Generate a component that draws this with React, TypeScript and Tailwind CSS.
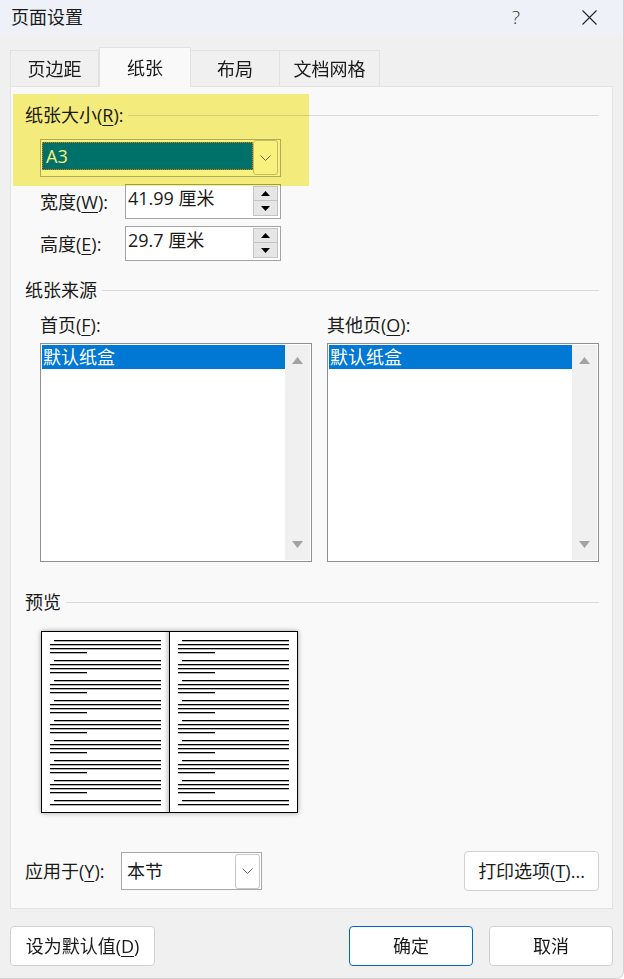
import React from "react";

const font = "font-['Open_Sans','Noto_Sans_CJK_SC',sans-serif]";

function Key({ k }: { k: string }) {
  return <span className="underline underline-offset-[3px] decoration-1">{k}</span>;
}

function GroupHeader({ children }: { children: React.ReactNode }) {
  return (
    <div className="flex items-center h-[22px]">
      <span className="text-[18px] leading-[22px] whitespace-nowrap pr-[5px]">{children}</span>
      <div className="flex-1 h-px bg-[#dadada]" />
    </div>
  );
}

function Chevron() {
  return (
    <svg width="11" height="6" viewBox="0 0 11 6">
      <path d="M0.5 0.5 L5.5 5.5 L10.5 0.5" fill="none" stroke="#6b6b6b" strokeWidth="1" />
    </svg>
  );
}

function Tri({ up, color, w = 10, h = 6 }: { up: boolean; color: string; w?: number; h?: number }) {
  return (
    <svg width={w} height={h} viewBox={`0 0 ${w} ${h}`}>
      <path d={up ? `M0 ${h} L${w / 2} 0 L${w} ${h} Z` : `M0 0 L${w / 2} ${h} L${w} 0 Z`} fill={color} />
    </svg>
  );
}

function SpinInput({ value }: { value: string }) {
  return (
    <div className="w-[156px] h-[35px] border border-[#a3a3a3] bg-white flex justify-between pl-[2px] pr-[2px]">
      <span className="text-[18px] leading-[22px] pt-[2px]">{value}</span>
      <div className="flex flex-col pt-[1px] w-[25px]">
        <div className="h-[15px] bg-[#e6e6e6] border border-[#c4c4c4] flex items-center justify-center">
          <Tri up color="#000" w={9} h={5} />
        </div>
        <div className="h-[15px] bg-[#e6e6e6] border border-[#c4c4c4] border-t-0 flex items-center justify-center">
          <Tri up={false} color="#000" w={9} h={5} />
        </div>
      </div>
    </div>
  );
}

function ListBox() {
  return (
    <div className="w-[272px] h-[219px] border border-[#8f8f8f] bg-white p-px flex">
      <div className="flex-1">
        <div className="h-[24px] bg-[#0078d4] text-white text-[18px] leading-[24px] pl-px">默认纸盒</div>
      </div>
      <div className="w-[25px] bg-[#f0f0f0] flex flex-col items-center justify-between py-[12px]">
        <Tri up color="#a3a3a3" w={11} h={7} />
        <Tri up={false} color="#a3a3a3" w={11} h={7} />
      </div>
    </div>
  );
}

function Page({ shadow }: { shadow?: boolean }) {
  const rows: React.ReactNode[] = [];
  for (let g = 0; g < 9; g++) {
    const y = 8 + g * 20;
    rows.push(<rect key={`a${g}`} x={12} y={y} width={107} height={1.3} />);
    rows.push(<rect key={`b${g}`} x={8} y={y + 4} width={111} height={1.3} />);
    if (g < 8) {
      rows.push(<rect key={`c${g}`} x={8} y={y + 8} width={111} height={1.3} />);
      rows.push(<rect key={`d${g}`} x={8} y={y + 12} width={37} height={1.3} />);
    }
  }
  return (
    <div className="relative w-[127px] h-full bg-white">
      <svg width="127" height="180" viewBox="0 0 127 180" className="block">
        <g fill="#000">{rows}</g>
      </svg>
      {shadow && (
        <div className="absolute right-0 top-0 h-full w-[5px] bg-gradient-to-r from-white to-[#cfcfcf]" />
      )}
    </div>
  );
}

function Button({ children, primary, w }: { children: React.ReactNode; primary?: boolean; w: string }) {
  return (
    <div
      className={`${w} h-[40px] rounded-[4px] bg-white flex items-center justify-center text-[18px] leading-[22px] border ${
        primary ? "border-[#0067c0]" : "border-[#d1d1d1]"
      }`}
    >
      {children}
    </div>
  );
}

export default function App() {
  return (
    <div className={`${font} w-[624px] h-[979px] bg-[#f0f0f0] text-[#1a1a1a] flex flex-col overflow-hidden border-r border-b border-[#d4d4d4] rounded-br-[8px]`}>
      {/* Title bar */}
      <div className="h-[34px] bg-[#eef2f8] flex items-center pl-[11px] pr-[26px]">
        <span className="text-[18px] leading-[22px] flex-1">页面设置</span>
        <span className="text-[19px] leading-[22px] font-light text-[#333] mr-[62px]">?</span>
        <svg width="15" height="15" viewBox="0 0 15 15">
          <path d="M0.5 0.5 L14.5 14.5 M14.5 0.5 L0.5 14.5" stroke="#222" strokeWidth="1.1" />
        </svg>
      </div>

      {/* Tabs */}
      <div className="flex items-end px-[10px] pt-[13px] -mb-px relative z-10">
        <div className="w-[89px] h-[37px] border border-b-0 border-[#e1e1e1] flex items-center justify-center text-[18px] leading-[22px]">页边距</div>
        <div className="w-[92px] h-[40px] border border-b-0 border-[#e1e1e1] bg-[#f9f9f9] flex items-center justify-center text-[18px] leading-[22px] pt-[1px]">纸张</div>
        <div className="w-[89px] h-[37px] border border-b-0 border-l-0 border-[#e1e1e1] flex items-center justify-center text-[18px] leading-[22px]">布局</div>
        <div className="w-[100px] h-[37px] border border-b-0 border-l-0 border-[#e1e1e1] flex items-center justify-center text-[18px] leading-[22px]">文档网格</div>
      </div>

      {/* Panel */}
      <div className="relative mx-[10px] h-[823px] border border-[#e3e3e3] bg-[#f9f9f9] pl-[14px] pr-[13px] pt-[17px]">
        <GroupHeader>
          纸张大小(<Key k="R" />):
        </GroupHeader>

        <div className="ml-[15px] mt-[13px] w-[241px] h-[38px] border border-[#b4b4b4] bg-white flex pl-px pr-[2px]">
          <div className="flex-1 pt-[2px]">
            <div className="h-[28px] bg-[#0078d4] border border-dotted border-[#ff7a00] text-white text-[18px] leading-[26px] pl-[3px]">A3</div>
          </div>
          <div className="w-[25px] h-[35px] border border-[#c8c8c8] rounded-[3px] flex items-center justify-center">
            <Chevron />
          </div>
        </div>

        <div className="ml-[15px] mt-[7px] flex items-center">
          <span className="w-[85px] text-[18px] leading-[22px]">
            宽度(<Key k="W" />):
          </span>
          <SpinInput value="41.99 厘米" />
        </div>
        <div className="ml-[15px] mt-[7px] flex items-center">
          <span className="w-[85px] text-[18px] leading-[22px]">
            高度(<Key k="E" />):
          </span>
          <SpinInput value="29.7 厘米" />
        </div>

        <div className="mt-[18px]">
          <GroupHeader>纸张来源</GroupHeader>
        </div>

        <div className="ml-[15px] mt-[13px] flex gap-[15px]">
          <div className="flex flex-col gap-[7px]">
            <span className="text-[18px] leading-[22px]">
              首页(<Key k="F" />):
            </span>
            <ListBox />
          </div>
          <div className="flex flex-col gap-[7px]">
            <span className="text-[18px] leading-[22px]">
              其他页(<Key k="O" />):
            </span>
            <ListBox />
          </div>
        </div>

        <div className="mt-[29px]">
          <GroupHeader>预览</GroupHeader>
        </div>

        <div className="ml-[16px] mt-[18px] w-[257px] h-[182px] border border-black bg-white flex shadow-[0_0_5px_rgba(0,0,0,0.35)]">
          <Page shadow />
          <div className="w-px bg-black" />
          <Page />
        </div>

        <div className="mt-[38px] flex items-center">
          <span className="w-[96px] text-[18px] leading-[22px]">
            应用于(<Key k="Y" />):
          </span>
          <div className="w-[141px] h-[38px] border border-[#a8a8a8] bg-white flex items-center justify-between pl-[5px] pr-px">
            <span className="text-[18px] leading-[22px]">本节</span>
            <div className="w-[25px] h-[35px] border border-[#c8c8c8] rounded-[3px] flex items-center justify-center">
              <Chevron />
            </div>
          </div>
          <div className="flex-1" />
          <Button w="w-[135px]">
            打印选项(<Key k="T" />)...
          </Button>
        </div>

        {/* highlight overlay */}
        <div className="absolute left-[2px] top-[7px] w-[296px] h-[92px] bg-[#f9f17e] mix-blend-multiply pointer-events-none" />
      </div>

      {/* Bottom buttons */}
      <div className="flex px-[10px] mt-[17px]">
        <Button w="w-[145px]">
          设为默认值(<Key k="D" />)
        </Button>
        <div className="flex-1" />
        <Button w="w-[124px]" primary>
          确定
        </Button>
        <div className="w-[16px]" />
        <Button w="w-[124px]">取消</Button>
      </div>
    </div>
  );
}
